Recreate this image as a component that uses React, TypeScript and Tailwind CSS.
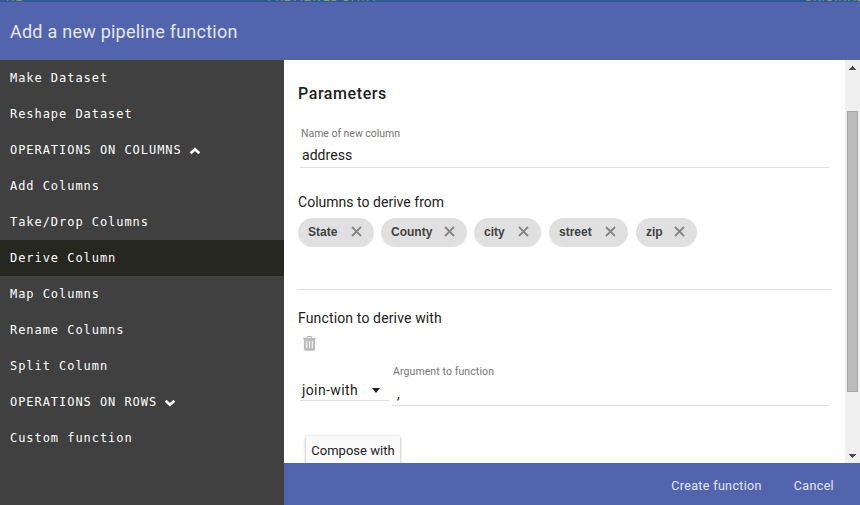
import React from "react";

type Item = { label: string; arrow?: "up" | "down"; active?: boolean };

const items: Item[] = [
  { label: "Make Dataset" },
  { label: "Reshape Dataset" },
  { label: "OPERATIONS ON COLUMNS", arrow: "up" },
  { label: "Add Columns" },
  { label: "Take/Drop Columns" },
  { label: "Derive Column", active: true },
  { label: "Map Columns" },
  { label: "Rename Columns" },
  { label: "Split Column" },
  { label: "OPERATIONS ON ROWS", arrow: "down" },
  { label: "Custom function" },
];

const chips = [
  { label: "State", width: "w-[76px]", text: "w-[31px]", gap: "mr-[7px]" },
  { label: "County", width: "w-[86px]", text: "w-[41px]", gap: "mr-[7px]" },
  { label: "city", width: "w-[67px]", text: "w-[22px]", gap: "mr-[8px]" },
  { label: "street", width: "w-[79px]", text: "w-[34px]", gap: "mr-[8px]" },
  { label: "zip", width: "w-[61px]", text: "w-[16px]", gap: "" },
];

function Chevron({ dir }: { dir: "up" | "down" }) {
  return (
    <svg width="12" height="8" viewBox="0 0 12 8" className="mt-[2px] ml-[7px]" fill="none" stroke="#fff" strokeWidth="2.6">
      <path d={dir === "up" ? "M1.6 6.3 6 2.3 10.4 6.3" : "M1.6 1.7 6 5.7 10.4 1.7"} />
    </svg>
  );
}

function Sidebar() {
  return (
    <nav className="w-[284px] shrink-0 bg-[#404040] text-white font-['DejaVu_Sans_Mono',monospace] text-[12px] tracking-[0.95px]">
      {items.map((i) => (
        <div key={i.label} className={`flex h-9 items-center pl-[10px] whitespace-pre ${i.active ? "bg-[#272722]" : ""}`}>
          <span>{i.label}</span>
          {i.arrow && <Chevron dir={i.arrow} />}
        </div>
      ))}
    </nav>
  );
}

function Scrollbar() {
  return (
    <div className="flex w-[15px] shrink-0 flex-col items-center bg-[#f0f0f0]">
      <svg width="7" height="4" viewBox="0 0 7 4" className="mt-[6px]" fill="#505050" shapeRendering="crispEdges">
        <path d="M3 0h1v1h1v1h1v1h1v1H0V3h1V2h1V1h1z" />
      </svg>
      <div className="mt-[41px] h-[281px] w-[11px] border border-[#a6a6a6] bg-[#bcbcbc]" />
      <svg width="7" height="4" viewBox="0 0 7 4" className="mt-[62px]" fill="#505050" shapeRendering="crispEdges">
        <path d="M0 0h7v1H6v1H5v1H4v1H3V3H2V2H1V1H0z" />
      </svg>
    </div>
  );
}

function Form() {
  return (
    <main className="flex-1 overflow-hidden bg-white pl-[14px] text-[#212121]">
      <h2 className="mt-[22px] h-6 text-[16px] leading-6 font-medium tracking-[0.58px]">Parameters</h2>
      <div className="mt-[19px] ml-[2px] h-[43px] w-[529px] border-b border-[#e0e0e0]">
        <div className="h-[17px] pl-[1px] text-[10.5px] leading-[17px] tracking-[-0.03px] text-[#757575]">Name of new column</div>
        <div className="mt-[3px] h-5 pl-[2px] text-[14px] leading-5 tracking-[0.05px]">address</div>
      </div>
      <div className="mt-[24px] h-5 text-[14px] leading-5 tracking-[0.02px]">Columns to derive from</div>
      <div className="mt-[6px] flex h-[72px] w-[533px] items-start border-b border-[#e0e0e0] font-['Liberation_Sans',Arial,sans-serif] text-[12px] font-bold text-[#424242]">
        {chips.map((c) => (
          <div key={c.label} className={`flex h-[29px] shrink-0 items-center rounded-full bg-[#e0e0e0] pl-[10px] ${c.width} ${c.gap}`}>
            <span className={`-mt-px ${c.text}`}>{c.label}</span>
            <svg width="11" height="11" viewBox="0 0 11 11" className="-mt-[3px] ml-[12px]" stroke="#858585" strokeWidth="1.8">
              <path d="M1 1 10 10M10 1 1 10" />
            </svg>
          </div>
        ))}
      </div>
      <div className="mt-[18px] h-5 text-[14px] leading-5 tracking-[0.14px]">Function to derive with</div>
      <svg width="13" height="15" viewBox="0 0 14 15" preserveAspectRatio="none" className="mt-[8px] ml-[5px]" fill="none">
        <path d="M4.5 2V1.5Q4.5.7 5.3.7H8.7Q9.5.7 9.5 1.5V2" stroke="#bdbdbd" strokeWidth="1.3" />
        <path d="M0 2H14V3.2H0Z" fill="#bdbdbd" />
        <path d="M1 3H13V13.3Q13 14.7 11.5 14.7H2.5Q1 14.7 1 13.3Z" fill="#bdbdbd" />
        <path d="M4 5V12M7 5V12M10 5V12" stroke="#fff" strokeWidth="1" />
      </svg>
      <div className="mt-[13px] ml-[2px] flex h-[42px] w-[529px]">
        <div className="mt-[15px] flex h-[22px] w-[89px] items-center justify-between border-b border-[#e0e0e0] pr-[9px] pl-[2px] text-[14px] leading-5 tracking-[0.38px]">
          <span>join-with</span>
          <svg width="8" height="5" viewBox="0 0 8 5" className="mt-[2px]" fill="#212121">
            <path d="M0 0h8L4 5z" />
          </svg>
        </div>
        <div className="ml-[3px] flex-1 border-b border-[#e0e0e0]">
          <div className="h-[17px] pl-[1px] text-[10.5px] leading-[16px] tracking-[0.1px] text-[#757575]">Argument to function</div>
          <div className="mt-[3px] h-5 pl-[5px] text-[14px] leading-5">,</div>
        </div>
      </div>
      <button className="mt-[30px] ml-[8px] flex h-[36px] w-[94px] justify-center bg-[#fafafa] pt-[5px] text-[13px] leading-5 tracking-[0.03px] whitespace-nowrap shadow-[0_1px_3px_rgba(0,0,0,0.35)]">
        Compose with
      </button>
    </main>
  );
}

export default function App() {
  return (
    <div className="flex h-[505px] w-[860px] flex-col overflow-hidden bg-[#404040] font-[Roboto,sans-serif]">
      <div className="flex h-[2px] shrink-0 items-end overflow-hidden bg-[#305894] text-[12px] leading-[12px] text-[#8f9485]">
        <div className="flex h-3 w-full shrink-0 translate-y-px tracking-[0.8px]">
          <span className="w-[261px] shrink-0 pl-[6px]">NE</span>
          <span className="w-[537px] shrink-0 pl-[6px]">PREVIEWED DATA</span>
          <span className="shrink-0 pl-[6px] whitespace-nowrap">ORIGINAL DATA</span>
        </div>
      </div>
      <header className="flex h-[58px] shrink-0 items-center bg-[#5264ae] pl-[10px] text-[18px] tracking-[0.24px] text-[#e4e7f4]">
        Add a new pipeline function
      </header>
      <div className="flex min-h-0 flex-1">
        <Sidebar />
        <div className="flex min-w-0 flex-1 flex-col">
          <div className="flex h-[403px] shrink-0">
            <Form />
            <Scrollbar />
          </div>
          <footer className="flex flex-1 items-center justify-end bg-[#5264ae] pt-[4px] pr-[26px] text-[12.5px] tracking-[0.35px] text-[#e4e7f4]">
            <button className="mr-[32px]">Create function</button>
            <button>Cancel</button>
          </footer>
        </div>
      </div>
    </div>
  );
}
